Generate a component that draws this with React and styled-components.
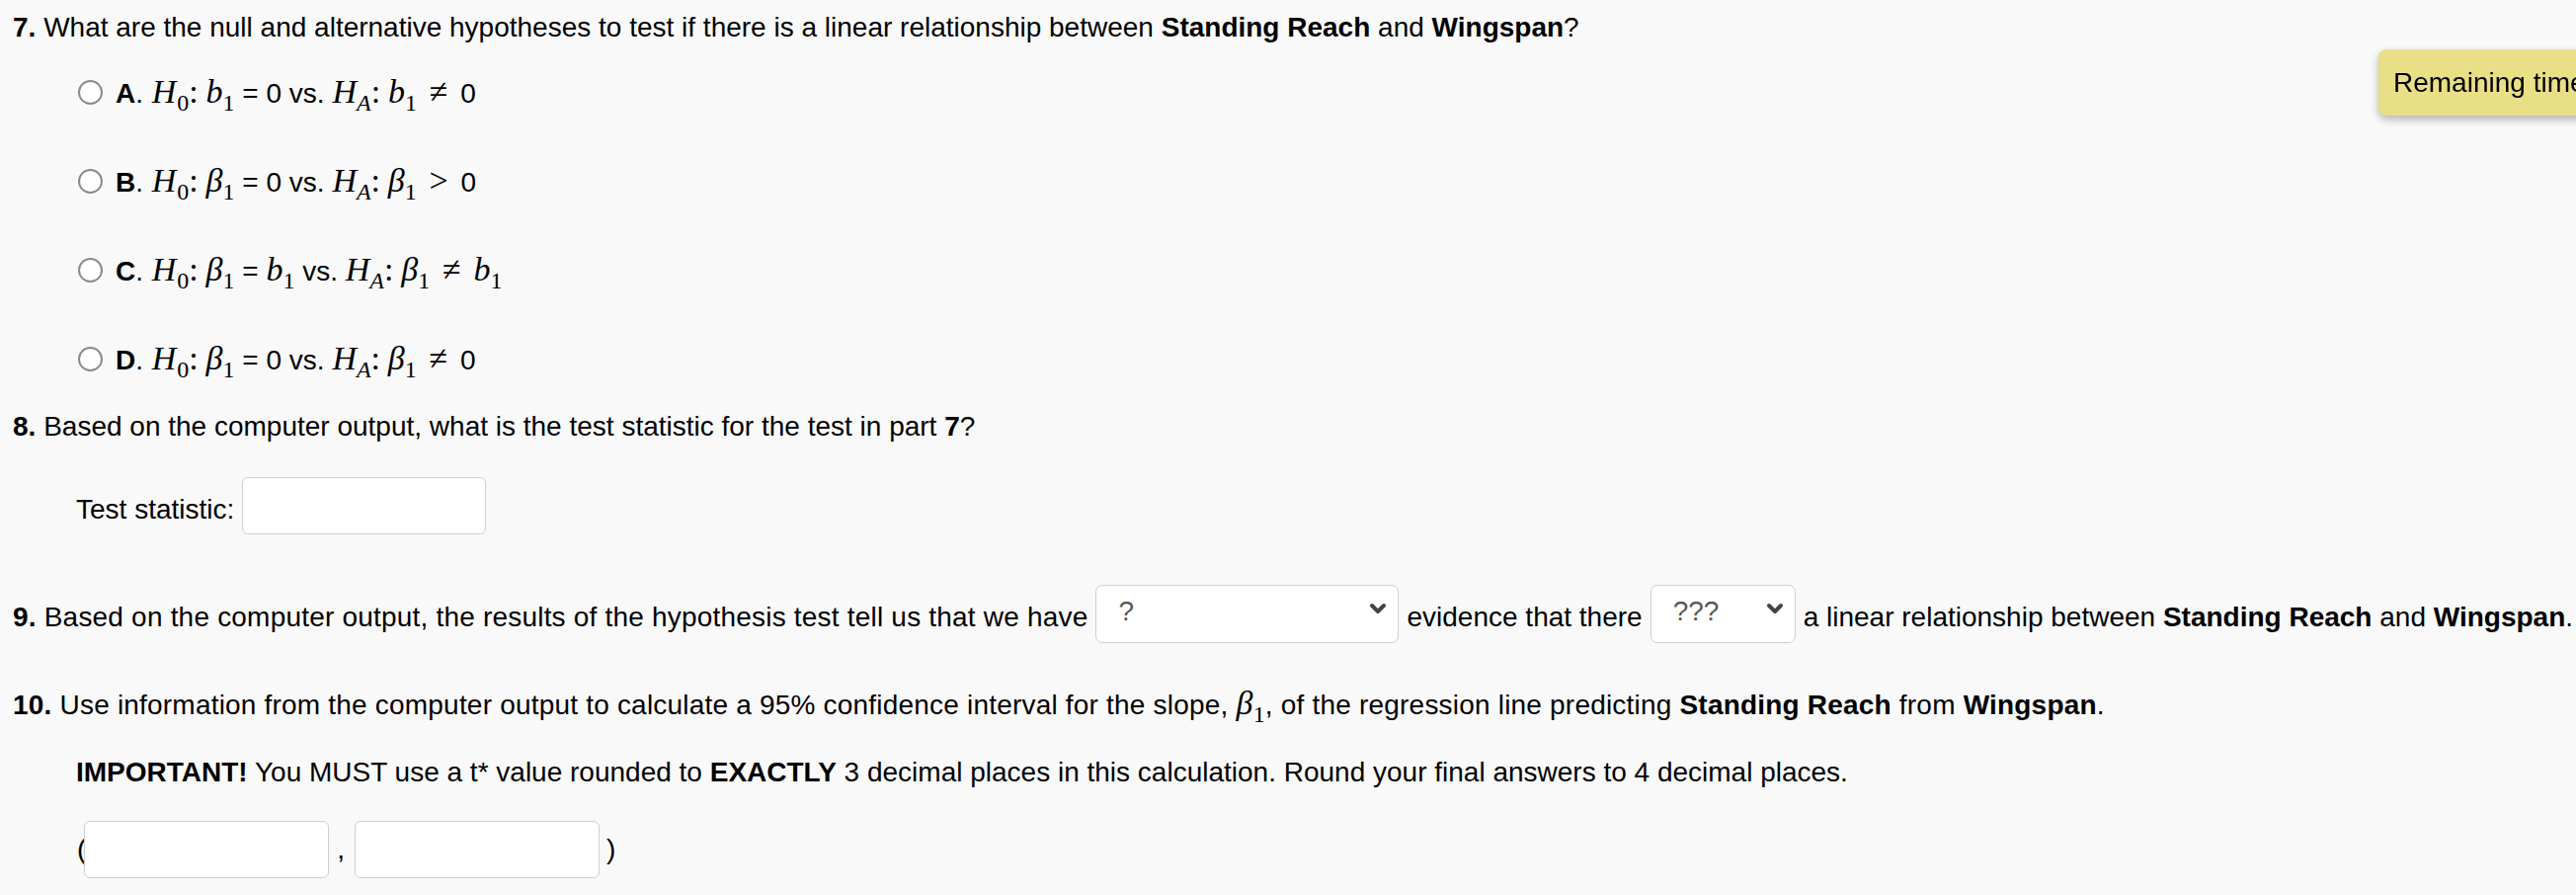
import React from 'react'
import styled, { createGlobalStyle } from 'styled-components'
import { ChevronDown } from 'lucide-react'

const GlobalStyle = createGlobalStyle`
    html, body {
        margin: 0;
        padding: 0;
        background: #f9f9f9;
        overflow: hidden;
    }
    body {
        font-family: "Liberation Sans", Arial, Helvetica, sans-serif;
        font-size: 28px;
        color: #000;
    }
`

const Page = styled.div`
    padding: 13px 0 0 13px;
    display: flex;
    flex-direction: column;
`

const Question = styled.p`
    margin: 0;
    margin-top: ${p => p.$top || 0}px;
    line-height: 30px;
    white-space: nowrap;
    letter-spacing: ${p => p.$track || 0}px;
`

const Indented = styled.div`
    padding-left: ${p => p.$indent || 64}px;
    margin-top: ${p => p.$top || 0}px;
    display: flex;
    align-items: center;
    white-space: nowrap;
    line-height: 30px;
`

const Label = styled.span`
    padding-top: 7px;
`

const Options = styled.div`
    display: flex;
    flex-direction: column;
    margin-top: 5px;
    padding-left: 66px;
`

const Option = styled.label`
    height: 90px;
    display: flex;
    align-items: center;
    white-space: nowrap;
`

const OptionText = styled.span`
    white-space: pre;
`

const Radio = styled.span`
    width: 21px;
    height: 21px;
    border-radius: 50%;
    border: 2px solid #8a8a8a;
    background: #fff;
    margin-right: 13px;
    flex-shrink: 0;
`

const Letter = styled.b`
    font-weight: bold;
`

const Math = styled.span`
    font-family: "Liberation Serif", "Times New Roman", serif;
    font-size: ${p => p.$size || 34}px;
    font-style: ${p => (p.$upright ? 'normal' : 'italic')};
    margin: 0 ${p => p.$space || 0}px;
`

const Sub = styled.sub`
    font-family: "Liberation Serif", "Times New Roman", serif;
    font-style: normal;
    font-size: 24px;
    vertical-align: -8px;
    line-height: 0;
`

const TextInput = styled.input`
    box-sizing: border-box;
    width: ${p => p.$width || 248}px;
    height: 58px;
    border: 1.5px solid #cfcfcf;
    border-radius: 6px;
    background: #fff;
    margin: 0;
    outline: none;
`

const FakeSelect = styled.div`
    box-sizing: border-box;
    width: ${p => p.$width}px;
    height: 59px;
    border: 1.5px solid #cfcfcf;
    border-radius: 7px;
    background: #fff;
    display: flex;
    align-items: center;
    justify-content: space-between;
    padding: 0 8px 4px 22px;
    margin: 0 8px 8px;
    color: #555;
    font-size: 28px;
    flex-shrink: 0;
    svg {
        color: #444;
        margin-top: -6px;
    }
`

const Row = styled.div`
    display: flex;
    align-items: center;
    white-space: nowrap;
    margin-top: ${p => p.$top || 0}px;
    height: ${p => p.$height || 30}px;
`

const Lead = styled.span`
    letter-spacing: 0.2px;
`

const Paren = styled.span`
    font-size: 28px;
    margin: ${p => p.$margin || '0'};
`

const TimerBox = styled.div`
    position: fixed;
    top: 50px;
    left: 2408px;
    width: 320px;
    height: 67px;
    box-sizing: border-box;
    background: #e9df87;
    border-radius: 8px;
    box-shadow: 0 4px 9px rgba(0, 0, 0, 0.28);
    display: flex;
    align-items: center;
    padding-left: 15px;
    font-size: 28px;
    white-space: nowrap;
`

const Hyp = ({ h0, rel, ha, rhs }) => (
    <>
        <Math $space={1}>H</Math><Sub>0</Sub>
        <Math $upright>:</Math>{' '}
        {h0}
        {' = '}
        {rel}
        {' vs. '}
        <Math>H</Math><Sub><Math $size={24}>A</Math></Sub>
        <Math $upright>:</Math>{' '}
        {ha}
        {' '}
        {rhs}
    </>
)

const b1 = <><Math>b</Math><Sub>1</Sub></>
const beta1 = <><Math>β</Math><Sub>1</Sub></>
const neq = <Math $upright $space={5}>≠</Math>
const gt = <Math $upright $space={5}>&gt;</Math>

export default function App() {
    return (
        <>
            <GlobalStyle />
            <Page>
                <Question>
                    <b>7.</b> What are the null and alternative hypotheses to test if there is a linear relationship between <b>Standing Reach</b> and <b>Wingspan</b>?
                </Question>

                <Options>
                    <Option>
                        <Radio />
                        <OptionText>
                            <Letter>A</Letter>. <Hyp h0={b1} rel="0" ha={b1} rhs={<>{neq} 0</>} />
                        </OptionText>
                    </Option>
                    <Option>
                        <Radio />
                        <OptionText>
                            <Letter>B</Letter>. <Hyp h0={beta1} rel="0" ha={beta1} rhs={<>{gt} 0</>} />
                        </OptionText>
                    </Option>
                    <Option>
                        <Radio />
                        <OptionText>
                            <Letter>C</Letter>. <Hyp h0={beta1} rel={b1} ha={beta1} rhs={<>{neq} {b1}</>} />
                        </OptionText>
                    </Option>
                    <Option>
                        <Radio />
                        <OptionText>
                            <Letter>D</Letter>. <Hyp h0={beta1} rel="0" ha={beta1} rhs={<>{neq} 0</>} />
                        </OptionText>
                    </Option>
                </Options>

                <Question $top={9}>
                    <b>8.</b> Based on the computer output, what is the test statistic for the test in part <b>7</b>?
                </Question>

                <Indented $top={36} $indent={64}>
                    <Label>Test statistic:&nbsp;</Label>
                    <TextInput $width={247} />
                </Indented>

                <Row $top={54} $height={60}>
                    <Lead><b>9.</b> Based on the computer output, the results of the hypothesis test tell us that we have</Lead>
                    <FakeSelect $width={307}>
                        ?
                        <ChevronDown size={24} strokeWidth={4} />
                    </FakeSelect>
                    <span>evidence that there</span>
                    <FakeSelect $width={147}>
                        ???
                        <ChevronDown size={24} strokeWidth={4} />
                    </FakeSelect>
                    <span>a linear relationship between <b>Standing Reach</b> and <b>Wingspan</b>.</span>
                </Row>

                <Question $top={42} $track={0.2}>
                    <b>10.</b> Use information from the computer output to calculate a 95% confidence interval for the slope, {beta1}, of the regression line predicting <b>Standing Reach</b> from <b>Wingspan</b>.
                </Question>

                <Indented $top={38} $indent={64}>
                    <span><b>IMPORTANT!</b> You MUST use a t* value rounded to <b>EXACTLY</b> 3 decimal places in this calculation. Round your final answers to 4 decimal places.</span>
                </Indented>

                <Indented $top={34} $indent={65}>
                    <Paren $margin="0 -2px 0 0">(</Paren>
                    <TextInput $width={248} />
                    <Paren $margin="0 10px 0 8px">,</Paren>
                    <TextInput $width={248} />
                    <Paren $margin="0 0 0 7px">)</Paren>
                </Indented>
            </Page>
            <TimerBox>Remaining time</TimerBox>
        </>
    )
}
